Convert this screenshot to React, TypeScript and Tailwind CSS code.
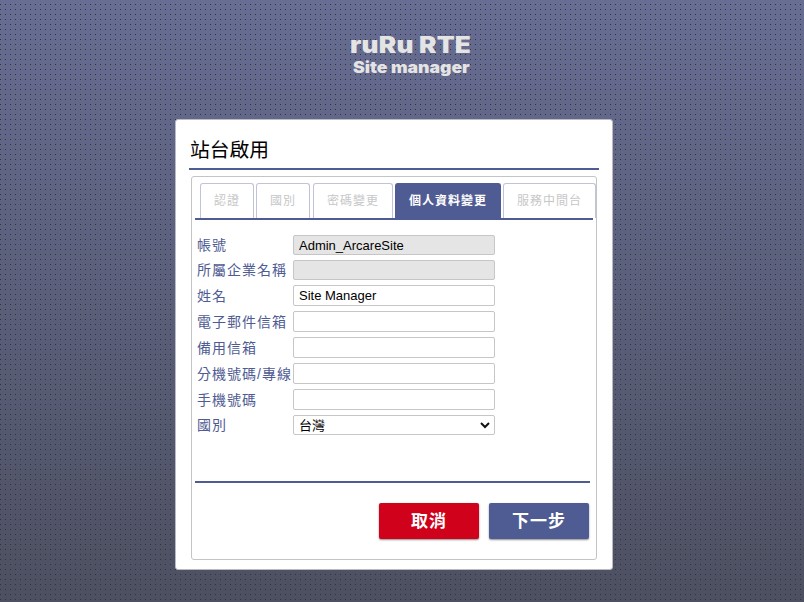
import React from 'react';

const cjk = "font-['Noto_Sans_CJK_TC',sans-serif]";

const tabs = [
  { label: '認證', box: 'w-[54px] mr-[2px]' },
  { label: '國別', box: 'w-[54px] mr-[3px]' },
  { label: '密碼變更', box: 'w-[80px] mr-[2px]' },
  { label: '個人資料變更', box: 'w-[106px] mr-[2px]', active: true },
  { label: '服務中間台', box: 'w-[93px]' },
];

const fields = [
  { label: '帳號', value: 'Admin_ArcareSite', disabled: true, box: 'h-5 mb-[5px]' },
  { label: '所屬企業名稱', value: '', disabled: true, box: 'h-5 mb-[5px]' },
  { label: '姓名', value: 'Site Manager', box: 'h-[21px] mb-[5px]' },
  { label: '電子郵件信箱', value: '', box: 'h-[21px] mb-[5px]' },
  { label: '備用信箱', value: '', box: 'h-[21px] mb-[5px]' },
  { label: '分機號碼/專線', value: '', box: 'h-[21px] mb-[5px]' },
  { label: '手機號碼', value: '', box: 'h-[21px] mb-[5px]' },
];

const labelClass =
  "w-24 shrink-0 whitespace-nowrap text-[14px] leading-[18px] tracking-[1px] text-[#4f5b93] font-['Liberation_Sans','Noto_Sans_CJK_TC',sans-serif]";

export default function App() {
  return (
    <div className="h-[602px] w-[804px] overflow-hidden bg-[linear-gradient(#676d93,#4d5061)]">
      <div className="h-full w-full bg-[conic-gradient(from_270deg_at_1px_1px,#333_90deg,transparent_90deg)] bg-[length:5px_5px] bg-[position:0_4px]">
        <header className="flex h-[119px] flex-col pl-[350px] pt-[32px] font-['Inter',sans-serif] font-black text-[#e4e4e4]">
          <div className="h-[26px] w-max origin-left scale-x-[1.16] whitespace-nowrap text-[22.5px] leading-[26px] tracking-[0.2px]">ruRu RTE</div>
          <div className="ml-[3px] h-[18px] w-max origin-left scale-x-[1.1] whitespace-nowrap text-[16px] leading-[18px]">Site manager</div>
        </header>

        <main className="ml-[175px] h-[451px] w-[438px] rounded-[3px] border border-[#b9bac2] bg-white pl-[13px] pt-[13px]">
          <h1 className={`h-[37px] w-[410px] border-b-2 border-[#4f5b93] pl-px text-[19.75px] leading-[31px] text-black ${cjk}`}>站台啟用</h1>

          <section className="ml-[2px] mt-[6px] h-[384px] w-[406px] rounded-[3px] border border-[#c3c4c6] pl-[3px] pt-[6px]">
            <nav className="flex h-[37px] w-[398px] border-b-2 border-[#4f5b93] pl-[5px]">
              {tabs.map((t) => (
                <div
                  key={t.label}
                  className={`flex shrink-0 items-center justify-center whitespace-nowrap rounded-t-[3px] border border-b-0 pb-[2px] text-[12px] leading-[18px] tracking-[1px] ${cjk} ${t.box} ${
                    t.active ? 'border-[#4f5b93] bg-[#4f5b93] font-bold text-white' : 'border-[#c0c4d8] bg-white text-[#c6c8c8]'
                  }`}
                >
                  {t.label}
                </div>
              ))}
            </nav>

            <form className="h-[261px] pl-[2px] pt-[15px]">
              {fields.map((f) => (
                <div key={f.label} className={`flex items-center ${f.box}`}>
                  <label className={labelClass}>{f.label}</label>
                  <input
                    readOnly
                    value={f.value}
                    className={`h-full w-[202px] rounded-[2px] border border-[#c6c6c6] px-[5px] font-['Liberation_Sans',sans-serif] text-[13px] text-black outline-none ${
                      f.disabled ? 'bg-[#e5e5e5]' : 'bg-white'
                    }`}
                  />
                </div>
              ))}
              <div className="flex h-5 items-center">
                <label className={labelClass}>國別</label>
                <div className={`flex h-full w-[202px] items-center justify-between rounded-[2px] border border-[#c6c6c6] bg-white pl-[5px] pr-1 text-[13px] leading-4 text-black ${cjk}`}>
                  <span>台灣</span>
                  <svg width="10" height="7" viewBox="0 0 10 7" fill="none" stroke="#111" strokeWidth="2">
                    <path d="M1 1l4 4 4-4" />
                  </svg>
                </div>
              </div>
            </form>

            <div className={`flex w-[395px] justify-end gap-[10px] border-t-2 border-[#4f5b93] pr-px pt-5 text-[17px] font-bold tracking-[1px] text-white ${cjk}`}>
              <button className="h-9 w-[100px] rounded-[2px] bg-[#d0021b] pb-[2px] leading-[34px] shadow-[0_1px_2px_rgba(0,0,0,0.45)]">取消</button>
              <button className="h-9 w-[100px] rounded-[2px] bg-[#4f5b93] pb-[2px] leading-[34px] shadow-[0_1px_2px_rgba(0,0,0,0.45)]">下一步</button>
            </div>
          </section>
        </main>
      </div>
    </div>
  );
}
